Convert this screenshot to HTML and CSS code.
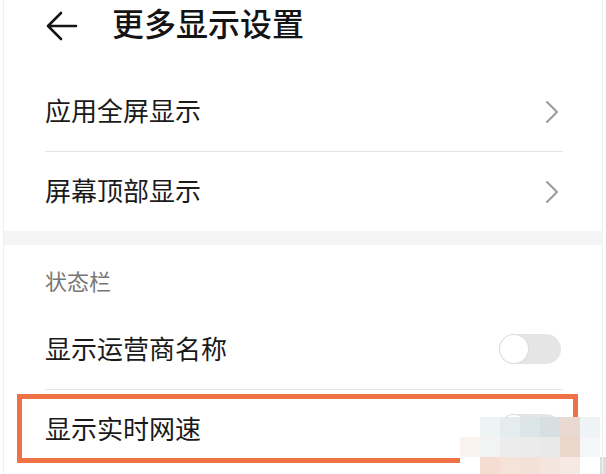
FILE: index.html
```html
<!DOCTYPE html>
<html lang="zh-CN">
<head>
<meta charset="utf-8">
<link rel="stylesheet" href="styles.css">
</head>
<body>
<div class="page">
  <header class="topbar">
    <svg class="back" width="34" height="32" viewBox="0 0 34 32">
      <path d="M31 16 H3 M16 3 L3 16 L16 29" fill="none" stroke="#151515" stroke-width="2.6" stroke-linecap="round" stroke-linejoin="round"/>
    </svg>
    <h1 class="title">更多显示设置</h1>
  </header>

  <section class="group">
    <div class="row">
      <span class="label">应用全屏显示</span>
      <svg class="chev" width="14" height="24" viewBox="0 0 14 24"><path d="M2 2 L12 12 L2 22" fill="none" stroke="#9a9a9a" stroke-width="2" stroke-linecap="round" stroke-linejoin="round"/></svg>
    </div>
    <div class="row last">
      <span class="label">屏幕顶部显示</span>
      <svg class="chev" width="14" height="24" viewBox="0 0 14 24"><path d="M2 2 L12 12 L2 22" fill="none" stroke="#9a9a9a" stroke-width="2" stroke-linecap="round" stroke-linejoin="round"/></svg>
    </div>
  </section>

  <div class="band"></div>

  <section class="group">
    <div class="subhead">状态栏</div>
    <div class="row">
      <span class="label">显示运营商名称</span>
      <span class="toggle"><span class="knob"></span></span>
    </div>
    <div class="row last">
      <span class="label">显示实时网速</span>
      <span class="toggle"><span class="knob"></span></span>
    </div>
  </section>

  <div class="highlight"></div>

  <div class="mosaic">
    <span class="c" style="background:#ffffff"></span><span class="c" style="background:#eef3f4"></span><span class="c" style="background:#e4eced"></span><span class="c" style="background:#dce5e7"></span><span class="c" style="background:#d7dfe1"></span><span class="c" style="background:#ead9d0"></span><span class="c" style="background:#eef3f5"></span><span class="c" style="background:#ffffff"></span>
    <span class="c" style="background:#fbf3ef"></span><span class="c" style="background:#f2f3f3"></span><span class="c" style="background:#ececec"></span><span class="c" style="background:#ebebeb"></span><span class="c" style="background:#e9e9e9"></span><span class="c" style="background:#ecd6cb"></span><span class="c" style="background:#f4f6f7"></span><span class="c" style="background:#ffffff"></span>
    <span class="c" style="background:#ffffff"></span><span class="c" style="background:#f6ddd2"></span><span class="c" style="background:#f5e2d9"></span><span class="c" style="background:#f3e0d7"></span><span class="c" style="background:#f4e6df"></span><span class="c" style="background:#f6e9e3"></span><span class="c" style="background:#ffffff"></span><span class="c" style="background:#dcdcdc"></span>
  </div>
</div>
</body>
</html>
```

FILE: styles.css
```css
* { box-sizing: border-box; }
html, body { margin: 0; padding: 0; background: #ffffff; }
body {
  font-family: "Noto Sans CJK SC", "Noto Sans", sans-serif;
  color: #1a1a1a;
}
.page {
  position: relative;
  width: 606px;
  height: 474px;
  overflow: hidden;
  background: #fff;
}
.page::before, .page::after {
  content: "";
  position: absolute;
  top: 0;
  bottom: 0;
  width: 1px;
  background: #f1f1f1;
}
.page::before { left: 3px; }
.page::after { left: 602px; }

.topbar {
  height: 73px;
  display: flex;
  align-items: flex-start;
  padding: 9px 0 0 45px;
}
.back { margin-top: 1px; display: block; }
.title {
  margin: -3px 0 0 33px;
  font-size: 32px;
  font-weight: 500;
  line-height: 32px;
  color: #141414;
  letter-spacing: 0;
}

.group { padding: 0 43px 0 45px; }
.row {
  display: flex;
  align-items: center;
  justify-content: space-between;
  height: 79px;
  border-bottom: 1px solid #e4e4e4;
}
.row.last { border-bottom: none; }
.label {
  font-size: 26px;
  line-height: 30px;
  color: #1a1a1a;
  margin-bottom: 4px;
}
.chev { display: block; margin-right: 4px; }

.band {
  height: 14px;
  margin: 0 3px 0 4px;
  background: #f5f5f5;
}

.subhead {
  padding-top: 21px;
  height: 66px;
  font-size: 22px;
  line-height: 28px;
  color: #777777;
}

.toggle {
  position: relative;
  width: 62px;
  height: 30px;
  border-radius: 15px;
  background: #e5e5e5;
  margin-right: 2px;
  margin-bottom: 2px;
  display: block;
}
.knob {
  position: absolute;
  left: 1px;
  top: 1px;
  width: 28px;
  height: 28px;
  border-radius: 50%;
  background: #ffffff;
  box-shadow: 0 0 0 1px #dcdcdc;
}

.highlight {
  position: absolute;
  left: 17px;
  top: 394px;
  width: 561px;
  height: 69px;
  border: 5px solid #ef7146;
}

.mosaic {
  position: absolute;
  left: 460px;
  top: 417px;
  display: grid;
  grid-template-columns: repeat(8, 20px);
  grid-template-rows: 20px 20px 20px;
}
.c { display: block; }
```
